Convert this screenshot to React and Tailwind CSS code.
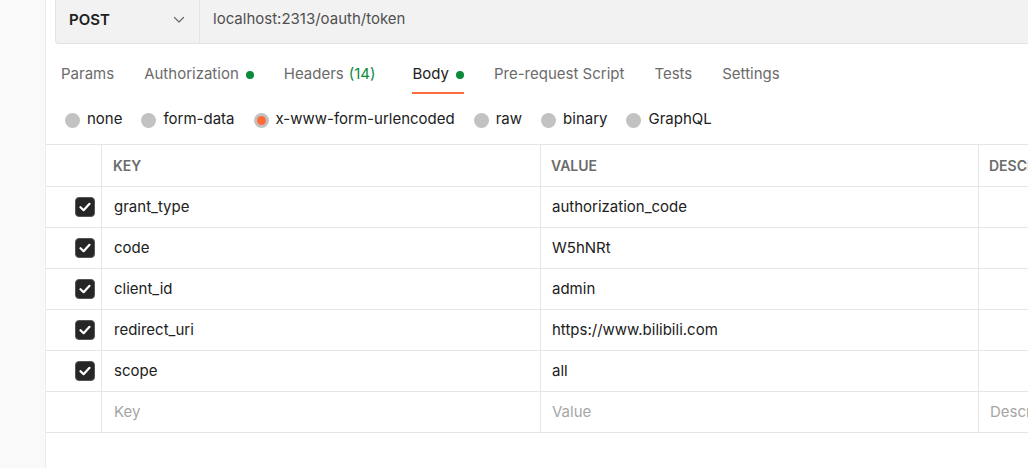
import React from 'react';

// Postman-style request body editor: url bar, tabs, body type radios, key/value table.

const TABS = [
  { label: 'Params' },
  { label: 'Authorization', dot: true },
  { label: 'Headers', count: '(14)', wide: true },
  { label: 'Body', dot: true, active: true },
  { label: 'Pre-request Script' },
  { label: 'Tests' },
  { label: 'Settings' },
];

const BODY_TYPES = ['none', 'form-data', 'x-www-form-urlencoded', 'raw', 'binary', 'GraphQL'];

const ROWS = [
  ['grant_type', 'authorization_code'],
  ['code', 'W5hNRt'],
  ['client_id', 'admin'],
  ['redirect_uri', 'https://www.bilibili.com'],
  ['scope', 'all'],
];

function Check() {
  return (
    <span className="flex h-[20px] w-[20px] items-center justify-center rounded-[4px] border border-[#555] bg-[#262626]">
      <svg width="12" height="10" viewBox="0 0 12 10" fill="none">
        <path d="M1.5 5.2 L4.6 8.2 L10.5 1.8" stroke="#fff" strokeWidth="2.2" strokeLinecap="round" strokeLinejoin="round" />
      </svg>
    </span>
  );
}

function Radio({ selected }) {
  return (
    <span className="flex h-[15px] w-[15px] items-center justify-center rounded-full bg-[#c2c2c2]">
      {selected && <span className="h-[9px] w-[9px] rounded-full bg-[#ff6c37]" />}
    </span>
  );
}

function Row({ k, v, placeholder }) {
  const tone = placeholder ? 'text-[#a6a6a6]' : 'text-[#212121]';
  return (
    <div className="flex h-[41px] border-b border-[#e6e6e6] text-[15px]">
      <div className="flex w-[56px] shrink-0 items-center justify-end border-r border-[#e6e6e6] pr-[6px]">
        {!placeholder && <Check />}
      </div>
      <div className={`flex w-[439px] shrink-0 items-center border-r border-[#e6e6e6] pl-[12px] ${tone}`}>
        {k}
      </div>
      <div className={`flex w-[438px] shrink-0 items-center border-r border-[#e6e6e6] pl-[11px] ${tone}`}>
        {v}
      </div>
      <div className="flex w-[200px] shrink-0 items-center pl-[11px] text-[#a6a6a6]">
        {placeholder ? 'Description' : ''}
      </div>
    </div>
  );
}

export default function App() {
  return (
    <div className="flex h-[468px] w-[1028px] overflow-hidden bg-white font-['Inter','Liberation_Sans',sans-serif]">
      <div className="w-[46px] shrink-0 border-r border-[#ececec] bg-[#f9f9f9]" />

      <div className="min-w-0 flex-1 overflow-hidden">
        {/* url bar */}
        <div className="ml-[9px] flex h-[44px] w-[1100px] rounded-bl-[4px] border-b border-l border-[#e3e3e3] bg-[#f2f2f2]">
          <div className="flex w-[144px] shrink-0 items-center justify-between border-r border-[#e3e3e3] pb-[3px] pl-[13px] pr-[14px]">
            <span className="text-[15px] font-semibold text-[#212121]">POST</span>
            <svg width="12" height="8" viewBox="0 0 12 8" fill="none">
              <path d="M1.5 1.5 L6 6 L10.5 1.5" stroke="#6b6b6b" strokeWidth="1.2" strokeLinecap="round" strokeLinejoin="round" />
            </svg>
          </div>
          <div className="flex items-center pb-[4px] pl-[13px] text-[15px] text-[#505050]">
            localhost:2313/oauth/token
          </div>
        </div>

        {/* tabs */}
        <div className="mt-[15px] flex h-[35px] pl-[15px] text-[15px]">
          {TABS.map((t) => (
            <div
              key={t.label}
              className={`flex items-center gap-[7px] border-b-2 pb-[2px] ${t.wide ? 'mr-[37px]' : 'mr-[30px]'} ${t.active ? 'border-[#ff6c37] text-[#212121]' : 'border-transparent text-[#6b6b6b]'}`}
            >
              <span>{t.label}</span>
              {t.count && <span className="-ml-[2px] text-[#0a8a3c]">{t.count}</span>}
              {t.dot && <span className="h-[8px] w-[8px] rounded-full bg-[#0a8a3c]" />}
            </div>
          ))}
        </div>

        {/* body type */}
        <div className="flex h-[50px] items-center gap-[19px] pl-[19px] pt-[2px] text-[15px] text-[#212121]">
          {BODY_TYPES.map((b) => (
            <div key={b} className="flex items-center gap-[7px]">
              <Radio selected={b === 'x-www-form-urlencoded'} />
              <span className="pb-[1px]">{b}</span>
            </div>
          ))}
        </div>

        {/* table */}
        <div className="w-[1140px] border-t border-[#e6e6e6]">
          <div className="flex h-[42px] border-b border-[#e6e6e6] text-[14px] font-semibold text-[#6b6b6b]">
            <div className="w-[56px] shrink-0 border-r border-[#e6e6e6]" />
            <div className="flex w-[439px] shrink-0 items-center border-r border-[#e6e6e6] pl-[11px]">KEY</div>
            <div className="flex w-[438px] shrink-0 items-center border-r border-[#e6e6e6] pl-[10px]">VALUE</div>
            <div className="flex w-[200px] shrink-0 items-center pl-[10px]">DESCRIPTION</div>
          </div>
          {ROWS.map(([k, v]) => (
            <Row key={k} k={k} v={v} />
          ))}
          <Row k="Key" v="Value" placeholder />
        </div>
      </div>
    </div>
  );
}
